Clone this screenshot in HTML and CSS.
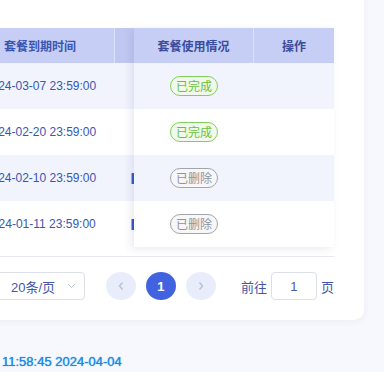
FILE: index.html
```html
<!DOCTYPE html>
<html lang="zh-CN">
<head>
  <meta charset="UTF-8" />
  <meta name="viewport" content="width=device-width, initial-scale=1.0"/>
  <title>套餐记录</title>
  <link rel="stylesheet" href="styles.css">
</head>
<body>
  <div class="card">
    <div class="table">
      <div class="main">
        <div class="row head">
          <div class="cell date">套餐到期时间</div>
          <div class="cell gap"></div>
        </div>
        <div class="row stripe">
          <div class="cell date">2024-03-07 23:59:00</div>
          <div class="cell gap"></div>
        </div>
        <div class="row">
          <div class="cell date">2024-02-20 23:59:00</div>
          <div class="cell gap"></div>
        </div>
        <div class="row stripe">
          <div class="cell date">2024-02-10 23:59:00</div>
          <div class="cell gap"><span class="mini-btn"></span></div>
        </div>
        <div class="row">
          <div class="cell date">2024-01-11 23:59:00</div>
          <div class="cell gap"><span class="mini-btn"></span></div>
        </div>
      </div>

      <div class="fixed">
        <div class="row head">
          <div class="cell status">套餐使用情况</div>
          <div class="cell op">操作</div>
        </div>
        <div class="row stripe">
          <div class="cell status"><span class="tag done">已完成</span></div>
          <div class="cell op"></div>
        </div>
        <div class="row">
          <div class="cell status"><span class="tag done">已完成</span></div>
          <div class="cell op"></div>
        </div>
        <div class="row stripe">
          <div class="cell status"><span class="tag removed">已删除</span></div>
          <div class="cell op"></div>
        </div>
        <div class="row">
          <div class="cell status"><span class="tag removed">已删除</span></div>
          <div class="cell op"></div>
        </div>
      </div>
    </div>

    <div class="pager">
      <div class="size-select">
        <span>20条/页</span>
        <svg width="9" height="6" viewBox="0 0 9 6"><path d="M1 1l3.5 3.5L8 1" fill="none" stroke="#c0c4cc" stroke-width="1"/></svg>
      </div>
      <div class="pages">
        <button class="page-btn">
          <svg width="8" height="10" viewBox="0 0 8 10"><path d="M5.5 1.5L2.5 5l3 3.5" fill="none" stroke="#b9c0d6" stroke-width="1.4"/></svg>
        </button>
        <button class="page-btn active">1</button>
        <button class="page-btn">
          <svg width="8" height="10" viewBox="0 0 8 10"><path d="M2.5 1.5L5.5 5l-3 3.5" fill="none" stroke="#b9c0d6" stroke-width="1.4"/></svg>
        </button>
      </div>
      <div class="jump">
        <span>前往</span>
        <div class="jump-input">1</div>
        <span>页</span>
      </div>
    </div>
  </div>

  <div class="footer">11:58:45 2024-04-04</div>
</body>
</html>
```

FILE: styles.css
```css
body {
  margin: 0;
  background-color: #f7f8fd;
  font-family: "Liberation Sans", "Noto Sans CJK SC", sans-serif;
  overflow: hidden;
}

.card {
  margin: -10px 20px 0 -54px;
  padding: 38px 30px 20px 20px;
  background-color: white;
  border-radius: 10px;
  box-shadow: 0 2px 6px rgba(60, 70, 140, 0.06);
}

.table {
  display: flex;
  align-items: flex-start;
  padding-bottom: 9px;
  border-bottom: 1px solid #e6e9f4;
}

.main {
  width: 168px;
}

.fixed {
  width: 200px;
  position: relative;
  z-index: 1;
  background-color: white;
  box-shadow: -3px 2px 8px rgba(40, 50, 110, 0.1);
}

.row {
  display: flex;
  height: 46px;
  align-items: center;
}

.row.head {
  height: 35px;
  background-color: #c6cef5;
  color: #3b4c9c;
  font-weight: bold;
  font-size: 12px;
}

.row.stripe {
  background-color: #f1f4fd;
}

.cell {
  height: 100%;
  display: flex;
  align-items: center;
  justify-content: center;
  box-sizing: border-box;
}

.head .cell {
  border-right: 1px solid #dce1fa;
}

.head .cell:last-child {
  border-right: none;
}

.date {
  width: 149px;
  font-size: 12px;
  color: #3a56b2;
  white-space: nowrap;
}

.gap {
  width: 19px;
  justify-content: flex-end;
}

.head .gap {
  background-color: #c0c8f1;
}

.mini-btn {
  display: block;
  width: 2px;
  height: 11px;
  background-color: #3a5ac4;
  border-left: 1px solid #d9a080;
}

.status {
  width: 120px;
}

.op {
  width: 80px;
}

.tag {
  display: inline-block;
  height: 20px;
  line-height: 18px;
  padding: 0 5px;
  box-sizing: border-box;
  border-radius: 10px;
  font-size: 12px;
  font-family: "Noto Sans CJK SC", sans-serif;
}

.tag.done {
  color: #67c23a;
  background-color: #f0f9eb;
  border: 1px solid #7fd05a;
}

.tag.removed {
  color: #8f939b;
  background-color: #f7f7f8;
  border: 1px solid #a2a5ac;
}

.pager {
  display: flex;
  justify-content: flex-end;
  align-items: center;
  height: 28px;
  margin-top: 15px;
  font-size: 13px;
  color: #4556a8;
}

.size-select {
  width: 90px;
  height: 28px;
  box-sizing: border-box;
  border: 1px solid #dcdfe6;
  border-radius: 4px;
  display: flex;
  align-items: center;
  justify-content: space-between;
  padding: 0 8px 0 15px;
}

.pages {
  display: flex;
  gap: 10px;
  margin-left: 21px;
}

.page-btn {
  width: 30px;
  height: 28px;
  border: none;
  border-radius: 50%;
  background-color: #e9edfb;
  display: flex;
  align-items: center;
  justify-content: center;
  padding: 0;
  font-family: "Liberation Sans", sans-serif;
  font-size: 13px;
  font-weight: bold;
}

.page-btn.active {
  background-color: #4163e0;
  color: white;
}

.jump {
  display: flex;
  align-items: center;
  gap: 4px;
  margin-left: 25px;
}

.jump-input {
  width: 46px;
  height: 28px;
  box-sizing: border-box;
  border: 1px solid #dcdfe6;
  border-radius: 4px;
  display: flex;
  align-items: center;
  justify-content: center;
  color: #4a5aa8;
}

.footer {
  margin-top: 34px;
  padding-left: 2px;
  font-size: 13px;
  line-height: 16px;
  color: #1a8ae6;
  text-shadow: 0 0 1px #1a8ae6;
}
```
